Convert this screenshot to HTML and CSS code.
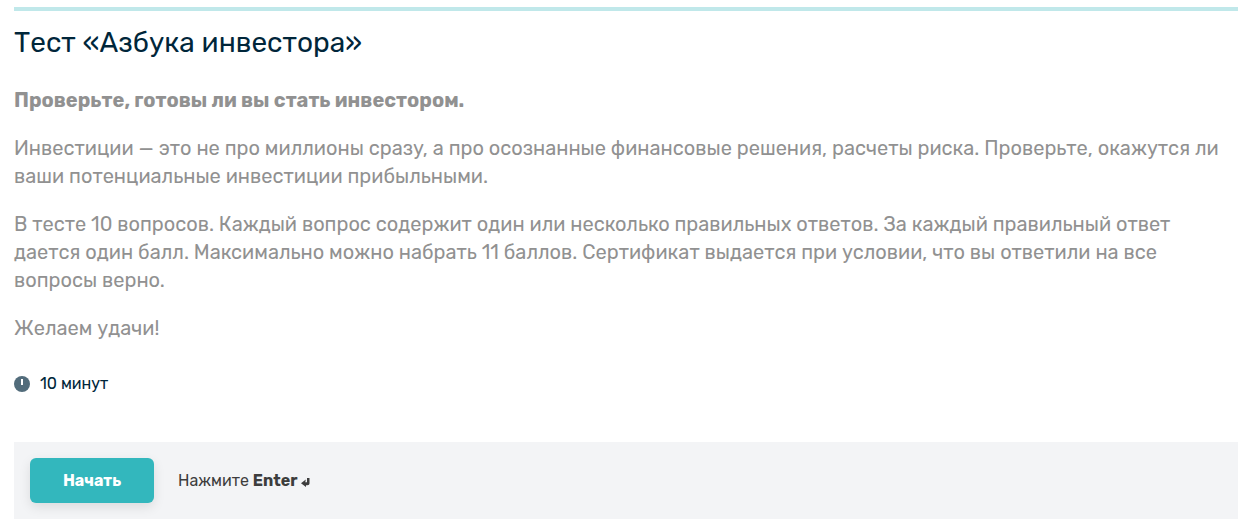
FILE: index.html
```html
<!DOCTYPE html>
<html lang="ru">
<head>
    <meta charset="UTF-8">
    <meta name="viewport" content="width=device-width, initial-scale=1.0">
    <title>Тест «Азбука инвестора»</title>
    <link rel="stylesheet" href="styles.css">
</head>
<body>
    <main class="quiz">
        <h1 class="quiz-title">Тест «Азбука инвестора»</h1>

        <div class="quiz-text">
            <p><strong>Проверьте, готовы ли вы стать инвестором.</strong></p>
            <p>Инвестиции — это не про миллионы сразу, а про осознанные финансовые решения, расчеты риска. Проверьте, окажутся ли ваши потенциальные инвестиции прибыльными.</p>
            <p>В тесте 10 вопросов. Каждый вопрос содержит один или несколько правильных ответов. За каждый правильный ответ дается один балл. Максимально можно набрать 11 баллов. Сертификат выдается при условии, что вы ответили на все вопросы верно.</p>
            <p>Желаем удачи!</p>
        </div>

        <div class="quiz-time">
            <svg class="clock" viewBox="0 0 16 16" aria-hidden="true">
                <circle cx="8" cy="8" r="8" fill="#526c7b"/>
                <path d="M8 3v6" stroke="#fff" stroke-width="2"/>
            </svg>
            <span>10 минут</span>
        </div>

        <div class="quiz-footer">
            <button type="button" class="start">Начать</button>
            <span class="hint">Нажмите <strong>Enter</strong>
                <svg class="enter" viewBox="0 0 9 10" aria-hidden="true">
                    <path d="M6 1h2.500v5.500q0 1.700-2 1.700H5V10L0 6.300 4.800 2.500 4.300 5.200H6z" fill="#3d3d3d"/>
                </svg>
            </span>
        </div>
    </main>
</body>
</html>
```
FILE: styles.css
```css
body {
    margin: 0;
    background: #fff;
    color: #00263a;
    font-family: Rubik, Roboto, "Noto Sans", sans-serif;
}

.quiz {
    margin: 7px 12px 0 14px;
    border-top: 4px solid #c0e8ea;
}

.quiz-title {
    margin: 14px 0 25px;
    font-size: 28px;
    line-height: 36px;
    font-weight: 400;
}

.quiz-text {
    color: #919191;
    font-size: 20px;
    line-height: 28px;
}

.quiz-text p {
    margin: 0 0 20px;
}

.quiz-time {
    display: flex;
    align-items: center;
    gap: 10px;
    margin-top: 32px;
    font-size: 16px;
    line-height: 20px;
}

.clock {
    width: 16px;
    height: 16px;
}

.quiz-footer {
    display: flex;
    align-items: center;
    gap: 24px;
    margin-top: 48px;
    padding: 16px;
    background: #f3f4f6;
}

.start {
    width: 124px;
    height: 45px;
    border: none;
    border-radius: 6px;
    background: #33b7bd;
    box-shadow: 0 4px 12px rgba(0, 0, 0, 0.1);
    color: #fff;
    font-family: inherit;
    font-size: 16px;
    font-weight: 700;
    cursor: pointer;
}

.hint {
    color: #3d3d3d;
    font-size: 16px;
}

.enter {
    width: 9px;
    height: 10px;
    vertical-align: -1px;
}
```
